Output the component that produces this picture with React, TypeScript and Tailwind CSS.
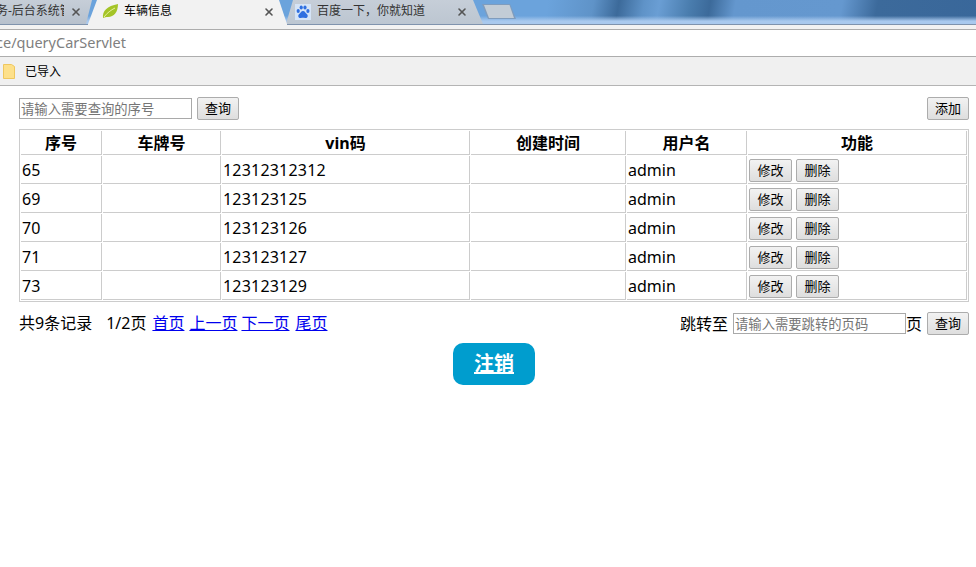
import { X } from 'lucide-react';

const font = 'font-["Noto_Sans","Noto_Sans_CJK_SC",sans-serif]';

const rows = [
  { id: '65', vin: '12312312312' },
  { id: '69', vin: '123123125' },
  { id: '70', vin: '123123126' },
  { id: '71', vin: '123123127' },
  { id: '73', vin: '123123129' },
];

const heads = ['序号', '车牌号', 'vin码', '创建时间', '用户名', '功能'];
const widths = ['w-[81px]', 'w-[118px]', 'w-[248px]', 'w-[155px]', 'w-[120px]', 'w-[219px]'];

function Btn({ label, className = '' }: { label: string; className?: string }) {
  return (
    <button className={`h-[23px] shrink-0 rounded-[2px] border border-[#acacac] bg-gradient-to-b from-[#f2f2f2] to-[#dedede] text-[13px] leading-none text-black ${className}`}>
      {label}
    </button>
  );
}

function TabClose() {
  return <X size={12} strokeWidth={3.2} className="shrink-0 text-[#555]" />;
}

function Leaf() {
  return (
    <svg width="17" height="16" viewBox="0 0 17 16" className="shrink-0">
      <path d="M1 15C0 8 5 3 16 1c0 8-4 13-10 13-2 0-3 0-5 1z" fill="#a4c427" />
      <path d="M2 14c3-4 7-7 11-9" stroke="#e6f0a0" strokeWidth="1" fill="none" />
    </svg>
  );
}

function Paw() {
  return (
    <svg width="16" height="16" viewBox="0 0 16 16" className="shrink-0">
      <rect width="16" height="16" fill="#d5e4f7" />
      <g fill="#2f6fe0">
        <ellipse cx="3.2" cy="7" rx="1.6" ry="2" />
        <ellipse cx="6.2" cy="3.6" rx="1.6" ry="2" />
        <ellipse cx="10" cy="3.6" rx="1.6" ry="2" />
        <ellipse cx="12.9" cy="7" rx="1.6" ry="2" />
        <path d="M8 7c-2 0-2.4 2-4 3.200C2.500 11.500 3.500 14.500 6 14c1-.2 3-.2 4 0 2.500.5 3.500-2.500 2-3.800C10.400 9 10 7 8 7z" />
      </g>
    </svg>
  );
}

function TabStrip() {
  return (
    <div className="flex h-[25px] border-b border-[#7f93ad] bg-[linear-gradient(to_bottom,transparent_66%,#a9c9ee_88%),linear-gradient(100deg,#6ba3dc_540px,#5f93c8_585px,#3c6a9a_610px,#5f93c8_635px,#6a9ed4_650px,#4a7dae_680px,#3c6a9a_700px,#6497ce_725px,#6598cf_830px,#3c6a9b_865px,#39679a_976px)]">
      <div className="flex h-[24px] w-[92px] shrink-0 items-center overflow-hidden bg-gradient-to-b from-[#c6ced8] to-[#b7c1cd] text-[12px] text-[#333] [clip-path:polygon(0_0,92px_0,86px_100%,0_100%)]">
        <span className="mb-[2px] ml-[-4px] w-[68px] shrink-0 overflow-hidden whitespace-nowrap">务-后台系统管理</span>
        <span className="ml-[6px]">
          <TabClose />
        </span>
      </div>
      <div className="relative z-10 ml-[-4px] flex h-[29px] w-[199px] shrink-0 items-start bg-[#f2f2f2] pt-[3px] pl-[14px] text-[12px] text-black [clip-path:polygon(9px_0,191px_0,199px_24px,199px_100%,0_100%,0_24px)]">
        <Leaf />
        <span className="ml-[5px] leading-[15px]">车辆信息</span>
        <span className="ml-auto mr-[12px] mt-[3px]">
          <TabClose />
        </span>
      </div>
      <div className="ml-[-1px] flex h-[24px] w-[197px] shrink-0 items-center bg-gradient-to-b from-[#c6ced8] to-[#bcc6d1] pl-[9px] text-[12px] text-[#333] [clip-path:polygon(7px_0,187px_0,197px_100%,0_100%)]">
        <Paw />
        <span className="mb-[2px] ml-[6px]">百度一下，你就知道</span>
        <span className="ml-[31px]">
          <TabClose />
        </span>
      </div>
      <div className="ml-[-1px] mt-[4px] h-[15px] w-[34px] shrink-0 bg-[#7f9cbd] p-px [clip-path:polygon(0_0,28px_0,100%_100%,6px_100%)]">
        <div className="h-full w-full bg-[#c2ccd6] [clip-path:polygon(1px_0,26.500px_0,31px_100%,6px_100%)]" />
      </div>
    </div>
  );
}

function Browser() {
  return (
    <>
      <TabStrip />
      <div className="box-content h-[4px] border-b border-[#adadad] bg-[#f2f2f2]" />
      <div className="box-content flex h-[26px] items-center overflow-hidden border-b border-[#adadad] bg-white text-[14.500px] text-[#808080]">
        <span className="ml-[-4px] whitespace-nowrap">ce/queryCarServlet</span>
      </div>
      <div className="box-content flex h-[28px] items-center border-b border-[#b4b4b4] bg-[#f0f0f0] pl-[3px] text-[12px] text-black">
        <svg width="12" height="15" viewBox="0 0 12 15" className="shrink-0">
          <path d="M.5.5h8l3 2v12H.500z" fill="#fde08a" stroke="#efc75e" />
        </svg>
        <span className="ml-[10px] mt-[2px]">已导入</span>
      </div>
    </>
  );
}

export default function App() {
  return (
    <div className={`h-[567px] w-[976px] overflow-hidden bg-white ${font}`}>
      <Browser />

      <div className="flex h-[43px] items-start justify-between pt-[11px] pr-[7px] pl-[19px]">
        <div className="flex items-center">
          <input
            placeholder="请输入需要查询的序号"
            className="h-[21px] w-[173px] border border-[#a9a9a9] px-px text-[13.330px] outline-none placeholder:text-[#757575]"
          />
          <Btn label="查询" className="ml-[5px] w-[42px]" />
        </div>
        <Btn label="添加" className="w-[42px]" />
      </div>

      <table className="ml-[19px] w-[950px] table-fixed border-separate border-spacing-px border border-[#cccccc] text-[16px] text-black">
        <thead>
          <tr>
            {heads.map((h, i) => (
              <th key={h} className={`h-[24px] border-r border-b border-[#cccccc] p-0 text-center font-bold leading-none ${widths[i]}`}>
                {h}
              </th>
            ))}
          </tr>
        </thead>
        <tbody>
          {rows.map((r) => (
            <tr key={r.id}>
              <td className="h-[28px] border-r border-b border-[#cccccc] p-px tracking-[0.2px]">{r.id}</td>
              <td className="border-r border-b border-[#cccccc] p-px" />
              <td className="border-r border-b border-[#cccccc] p-px tracking-[0.2px]">{r.vin}</td>
              <td className="border-r border-b border-[#cccccc] p-px" />
              <td className="border-r border-b border-[#cccccc] p-px">admin</td>
              <td className="border-r border-b border-[#cccccc] p-px">
                <div className="mt-px flex gap-[4px]">
                  <Btn label="修改" className="w-[43px]" />
                  <Btn label="删除" className="w-[43px]" />
                </div>
              </td>
            </tr>
          ))}
        </tbody>
      </table>

      <div className="mt-[10px] flex h-[23px] items-center justify-between pr-[7px] pl-[19px] text-[16px] text-black">
        <div className="flex items-center whitespace-nowrap pb-[2px]">
          <span>共9条记录</span>
          <span className="ml-[14px]">1/2页</span>
          <a href="#" className="ml-[6px] text-[#0000ee] underline">首页</a>
          <a href="#" className="ml-[5px] text-[#0000ee] underline">上一页</a>
          <a href="#" className="ml-[4px] text-[#0000ee] underline">下一页</a>
          <a href="#" className="ml-[6px] text-[#0000ee] underline">尾页</a>
        </div>
        <div className="flex items-center">
          <span>跳转至</span>
          <input
            placeholder="请输入需要跳转的页码"
            className="ml-[5px] h-[21px] w-[173px] border border-[#a9a9a9] px-px text-[13.330px] outline-none placeholder:text-[#757575]"
          />
          <span>页</span>
          <Btn label="查询" className="ml-[5px] w-[42px]" />
        </div>
      </div>

      <div className="mt-[8px] flex justify-center pl-[12px]">
        <a href="#" className="flex h-[42px] w-[82px] items-center justify-center rounded-[10px] bg-[#009dce] text-[20px] font-bold text-white underline">
          注销
        </a>
      </div>
    </div>
  );
}
